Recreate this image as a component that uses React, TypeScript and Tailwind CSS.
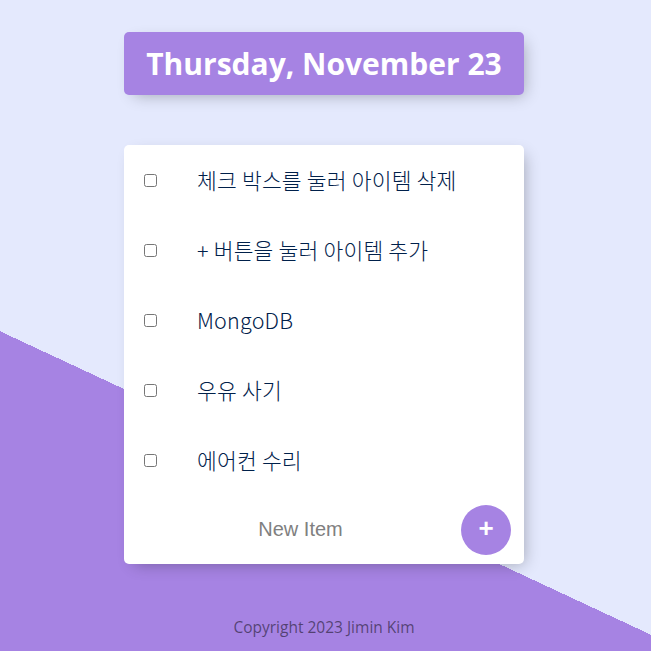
import React from "react";

const items = [
  "체크 박스를 눌러 아이템 삭제",
  "+ 버튼을 눌러 아이템 추가",
  "MongoDB",
  "우유 사기",
  "에어컨 수리",
];

export default function App() {
  return (
    <div className="w-full h-screen overflow-hidden bg-[#E4E9FD] bg-[linear-gradient(25deg,#A683E3_33.5%,#E4E9FD_33.5%)] flex flex-col items-center pt-[32px] pr-[3px]">
      <div className="w-[400px] h-[63px] rounded-[5px] bg-[#A683E3] shadow-[5px_5px_15px_-5px_rgba(0,0,0,0.3)] flex items-center justify-center">
        <h1 className="text-white text-[30px] font-bold font-['Open_Sans','Noto_Sans',sans-serif] leading-none">
          Thursday, November 23
        </h1>
      </div>

      <div className="mt-[50px] w-[400px] rounded-[5px] bg-white shadow-[5px_5px_15px_-5px_rgba(0,0,0,0.3)] flex flex-col">
        {items.map((t) => (
          <div key={t} className="h-[70px] flex items-center">
            <input type="checkbox" className="m-[20px] w-[13px] h-[13px]" />
            <p className="px-[20px] text-[21.5px] font-extralight tracking-[0.2px] text-[#00204a] font-['Noto_Sans_CJK_KR','Noto_Sans',sans-serif]">
              {t}
            </p>
          </div>
        ))}
        <div className="h-[69px] flex items-center pl-[20px]">
          <input
            type="text"
            placeholder="New Item"
            className="w-[313px] h-[60px] text-center text-[20px] bg-transparent outline-none font-['Liberation_Sans',Arial,sans-serif] placeholder:text-[grey]"
          />
          <button className="ml-[4px] w-[50px] h-[50px] rounded-full bg-[#A683E3] text-white text-[26px] font-bold leading-none pb-[3px] font-['Liberation_Sans',Arial,sans-serif] flex items-center justify-center">
            +
          </button>
        </div>
      </div>

      <footer className="mt-[52px] text-[15.5px] text-black/50 font-['Open_Sans','Noto_Sans',sans-serif]">
        Copyright 2023 Jimin Kim
      </footer>
    </div>
  );
}
